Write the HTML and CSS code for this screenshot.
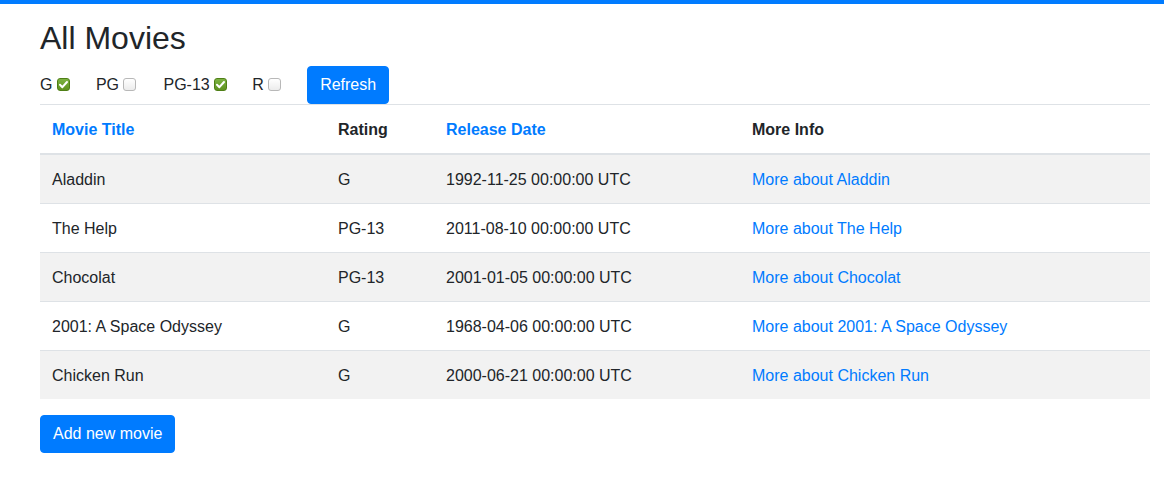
FILE: index.html
```html
<!DOCTYPE html>
<html lang="en">
<head>
<meta charset="utf-8">
<title>All Movies</title>
<link rel="stylesheet" href="styles.css">
</head>
<body>
<div class="container">
  <h2 class="title">All Movies</h2>
  <form class="filters">
    <label class="filter f-g">G <span class="box checked"><svg viewBox="0 0 13 13" width="13" height="13"><path d="M3 6.8 L5.4 9.2 L10 4" fill="none" stroke="#fff" stroke-width="2" stroke-linecap="round" stroke-linejoin="round"/></svg></span></label>
    <label class="filter f-pg">PG <span class="box"></span></label>
    <label class="filter f-pg13">PG-13 <span class="box checked"><svg viewBox="0 0 13 13" width="13" height="13"><path d="M3 6.8 L5.4 9.2 L10 4" fill="none" stroke="#fff" stroke-width="2" stroke-linecap="round" stroke-linejoin="round"/></svg></span></label>
    <label class="filter f-r">R <span class="box"></span></label>
    <button type="button" class="btn">Refresh</button>
  </form>
  <table class="movies">
    <thead>
      <tr>
        <th class="c-title"><a href="#">Movie Title</a></th>
        <th class="c-rating">Rating</th>
        <th class="c-date"><a href="#">Release Date</a></th>
        <th class="c-info">More Info</th>
      </tr>
    </thead>
    <tbody>
      <tr><td>Aladdin</td><td>G</td><td>1992-11-25 00:00:00 UTC</td><td><a href="#">More about Aladdin</a></td></tr>
      <tr><td>The Help</td><td>PG-13</td><td>2011-08-10 00:00:00 UTC</td><td><a href="#">More about The Help</a></td></tr>
      <tr><td>Chocolat</td><td>PG-13</td><td>2001-01-05 00:00:00 UTC</td><td><a href="#">More about Chocolat</a></td></tr>
      <tr><td>2001: A Space Odyssey</td><td>G</td><td>1968-04-06 00:00:00 UTC</td><td><a href="#">More about 2001: A Space Odyssey</a></td></tr>
      <tr><td>Chicken Run</td><td>G</td><td>2000-06-21 00:00:00 UTC</td><td><a href="#">More about Chicken Run</a></td></tr>
    </tbody>
  </table>
  <button type="button" class="btn">Add new movie</button>
</div>
</body>
</html>
```
FILE: styles.css
```css
html, body {
  margin: 0;
  padding: 0;
}
body {
  border-top: 4px solid #007bff;
  background: #fff;
  color: #212529;
  font-family: "Liberation Sans", Arial, sans-serif;
  font-size: 16px;
  line-height: 24px;
}
.container {
  padding: 0 14px 0 40px;
}
.title {
  margin: 15px 0 0;
  font-size: 32px;
  line-height: 38px;
  font-weight: 400;
}
.filters {
  display: flex;
  align-items: center;
  margin-top: 9px;
  height: 38px;
}
.filter {
  display: flex;
  align-items: center;
  white-space: pre;
}
.f-g { margin-right: 26px; }
.f-pg { margin-right: 27px; }
.f-pg13 { margin-right: 25px; }
.f-r { margin-right: 26px; }
.box {
  display: inline-block;
  box-sizing: border-box;
  width: 13px;
  height: 13px;
  border: 1px solid #b8b8b8;
  border-radius: 3px;
  background: linear-gradient(#ffffff, #ececec);
  position: relative;
  top: -1px;
}
.box.checked {
  border-color: #4f7f16;
  background: linear-gradient(#7cb342, #5f921f);
}
.box svg {
  display: block;
  margin: -1px;
}
.btn {
  display: inline-block;
  font-family: inherit;
  font-size: 16px;
  line-height: 24px;
  padding: 6px 12px;
  color: #fff;
  background: #007bff;
  border: 1px solid #007bff;
  border-radius: 4px;
  cursor: pointer;
}
.movies {
  width: 100%;
  border-collapse: collapse;
  margin-bottom: 16px;
}
.movies th,
.movies td {
  padding: 13px 12px 11px;
  text-align: left;
  vertical-align: top;
  border-top: 1px solid #dee2e6;
}
.movies thead th {
  vertical-align: bottom;
  border-bottom: 2px solid #dee2e6;
  font-weight: 700;
}
.movies tbody tr:nth-child(odd) {
  background: #f2f2f2;
}
.movies a {
  color: #007bff;
  text-decoration: none;
}
.c-title { width: 262px; }
.c-rating { width: 84px; }
.c-date { width: 282px; }
```
